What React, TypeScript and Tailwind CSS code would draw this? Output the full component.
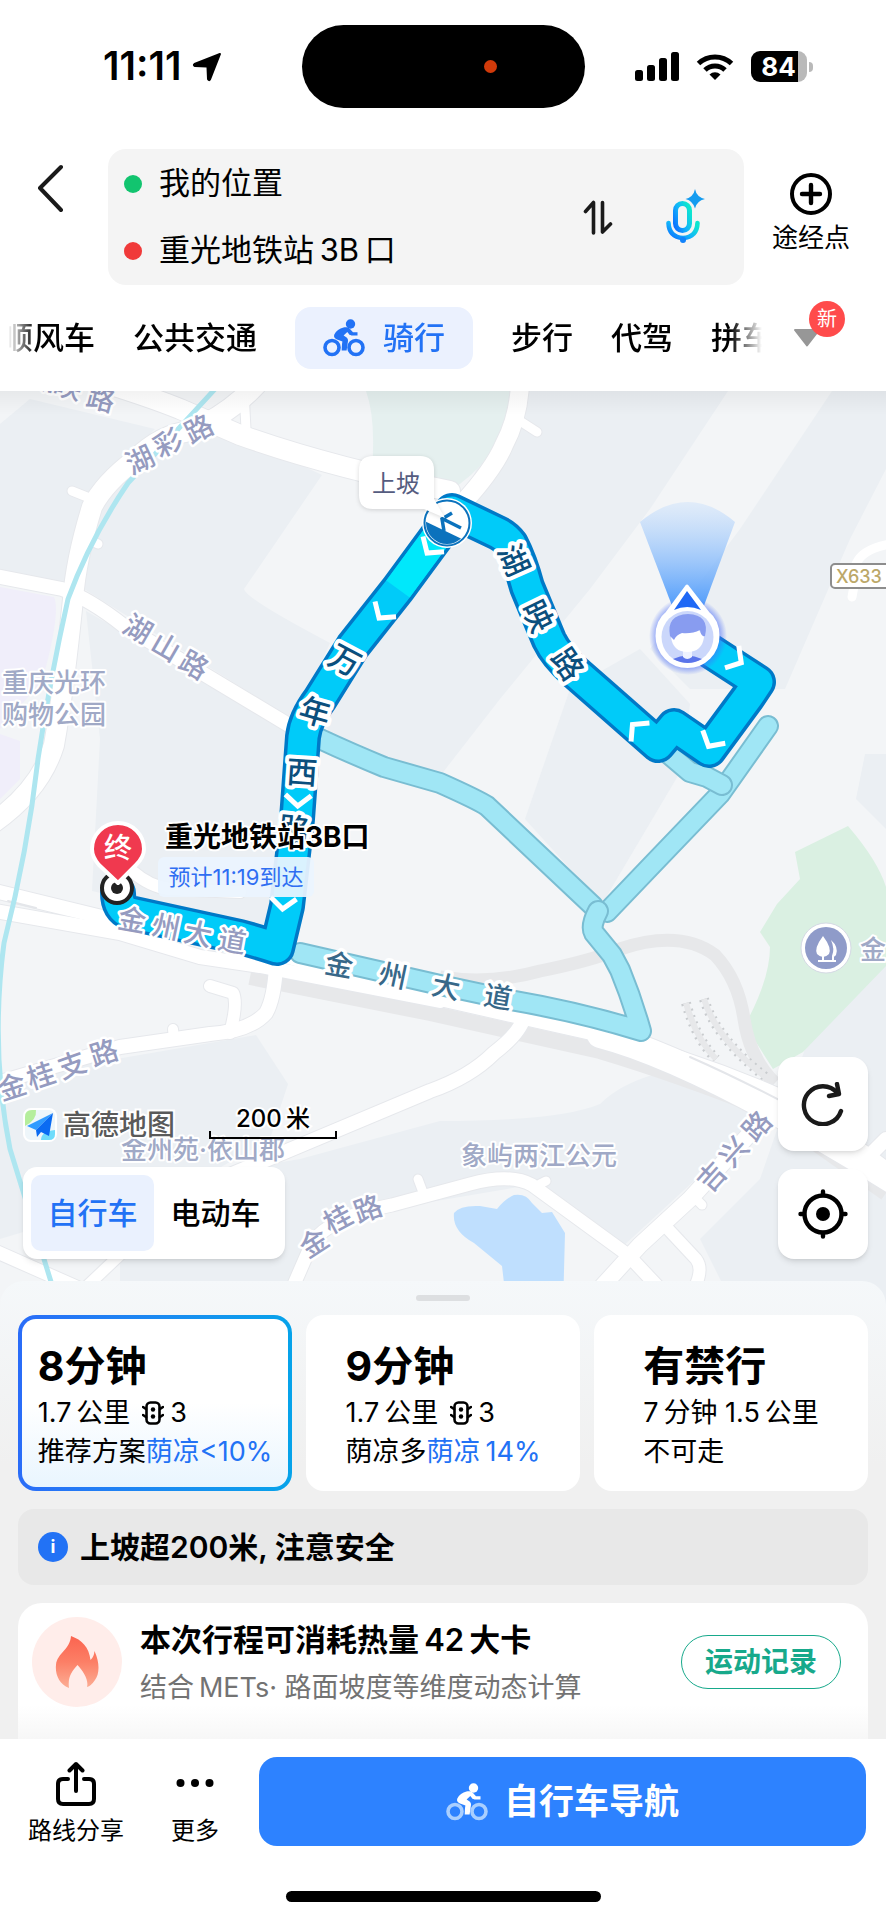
import { useState } from "react";
import clsx from "clsx";

type Glyph = [char: string, x: number, y: number, angle: number];

const tabsBefore = ["顺风车", "公共交通"];
const tabsAfter = ["步行", "代驾", "拼车"];

const routeLabels: Glyph[] = [
  ["万", 345, 661, 28],
  ["年", 315, 713, 16],
  ["西", 302, 773, 4],
  ["路", 294, 830, 6],
  ["湖", 514, 561, 66],
  ["映", 538, 617, 64],
  ["路", 568, 665, 56],
];

const avenueLabels: Glyph[] = [
  ["金", 339, 966, 10],
  ["州", 393, 977, 12],
  ["大", 446, 988, 12],
  ["道", 498, 998, 10],
];

const roadLabels: Glyph[] = [
  ["湖", 44, 380, 15],
  ["映", 68, 388, 15],
  ["路", 101, 400, 15],
  ["湖", 140, 461, -25],
  ["彩", 168, 444, -27],
  ["路", 199, 430, -27],
  ["湖", 138, 630, 30],
  ["山", 166, 648, 30],
  ["路", 194, 666, 30],
  ["金", 132, 921, 10],
  ["州", 166, 928, 12],
  ["大", 198, 935, 12],
  ["道", 232, 942, 10],
  ["金", 12, 1088, -18],
  ["桂", 41, 1077, -18],
  ["支", 72, 1066, -20],
  ["路", 104, 1054, -18],
  ["金", 314, 1244, -33],
  ["桂", 338, 1220, -28],
  ["路", 368, 1210, -20],
  ["吉", 712, 1178, -48],
  ["兴", 734, 1153, -48],
  ["路", 757, 1127, -48],
];

const chevrons = [
  [430, 550, 36],
  [382, 615, 36],
  [298, 802, 3],
  [283, 905, 5],
  [737, 661, -58],
  [711, 743, 30],
  [636, 729, 135],
];

const altRoutes = [
  "M768 727 L720 795 L650 868 L607 913",
  "M658 746 L690 773 L707 778 L722 786",
  "M320 740 Q350 754 384 768 L440 784 Q478 801 487 807 L593 907",
  "M300 954 L440 986 L510 1001 Q580 1013 641 1032 Q632 1000 620 971 L612 956 L594 934 Q590 927 598 912",
];

const mainRoute =
  "M687 637 L758 683 L748 698 L709 751 L674 727 L658 746 L600 695 L576 674 Q556 656 549 641 L527 588 Q520 562 511 545 Q506 538 498 534 L452 512 L437 537 L398 590 L353 647 L320 700 Q305 720 303 738 L297 820 L287 907 L277 949 Q258 943 240 938 L130 914 Q118 910 118 894";

const whiteRoads: [string, number][] = [
  ["M105 384 Q150 398 180 410 L240 436 Q330 468 450 492", 20],
  ["M256 386 Q228 416 190 432 Q160 436 136 460 Q104 484 92 508 Q76 560 73 600 Q64 690 54 746 Q40 792 -10 826", 20],
  ["M-5 577 L62 590 Q90 600 124 627 L292 728", 14],
  ["M520 386 Q518 420 504 446 Q494 470 462 505", 18],
  ["M520 422 L537 433", 9],
  ["M72 492 L92 500", 9],
  ["M88 540 L98 545", 9],
  ["M244 392 L246 430", 9],
  ["M132 872 Q150 888 170 890 L240 893", 12],
  ["M-5 892 L110 920 L260 950 L440 1000 L600 1036 Q700 1060 800 1106 L900 1180", 14],
  ["M-5 912 L120 934 L200 958 L260 967 L440 1002", 14],
  ["M600 1036 Q700 1062 900 1186", 26],
  ["M276 968 Q274 1000 266 1014 Q250 1032 210 1035 L120 1048 L-10 1086", 14],
  ["M210 987 L233 994 Q238 1004 230 1034", 12],
  ["M173 1030 L174 1040", 10],
  ["M524 1018 Q520 1034 494 1054 Q470 1078 430 1092 L230 1176", 14],
  ["M292 1290 L312 1244 Q330 1218 392 1206 L470 1185 Q510 1174 532 1186 L628 1256 L660 1290", 13],
  ["M418 1180 L424 1196", 9],
  ["M540 1185 L546 1182", 9],
  ["M598 1292 L640 1246 L690 1200 L778 1104", 16],
  ["M696 1200 L702 1206", 9],
  ["M668 1230 L696 1260 Q704 1270 694 1290", 12],
  ["M-5 1252 L90 1294", 13],
  ["M84 1290 L122 1254", 11],
  ["M886 1140 L862 1164", 14],
];

const Glyphs = ({ items, className }: { items: Glyph[]; className: string }) => (
  <g className={className} textAnchor="middle" dominantBaseline="central" stroke="#fff" paintOrder="stroke" strokeLinejoin="round">
    {items.map(([char, x, y, angle]) => (
      <text key={`${char}${x}`} x={x} y={y} transform={`rotate(${angle} ${x} ${y})`}>
        {char}
      </text>
    ))}
  </g>
);

const CyclistIcon = ({ wheel = "currentColor" }: { wheel?: string }) => (
  <svg viewBox="0 0 42 38" className="h-[38px] w-[42px]" fill="none" aria-hidden="true">
    <circle cx="9" cy="28.500" r="7" stroke={wheel} strokeWidth="3.600" />
    <circle cx="33" cy="28.500" r="7" stroke={wheel} strokeWidth="3.600" />
    <circle cx="27.500" cy="5" r="4.700" fill="currentColor" />
    <path
      d="M20.500 8.500C16.500 9.500 13 12 11.300 15.600C10.500 17.800 11.400 19.400 13.400 20.200L19.400 22.400C18.800 25.400 18.900 28.400 18.700 31.600H23.600L25 22C25.200 20 24.400 18.800 22.900 17.900L20.600 16.500L24.300 12.900L26.300 15.600C26.900 16.300 27.600 16.500 28.600 16.500H34.500V13.300H30L26.800 9.800C25.200 8.200 22.700 7.900 20.500 8.500Z"
      fill="currentColor"
    />
  </svg>
);

const StatusBar = () => (
  <div className="grid h-[149px] grid-cols-[1fr_283px_1fr] items-start pt-[25px]">
    <div className="flex h-[83px] items-center justify-end gap-2.5 pr-20">
      <span className="text-[39px] font-semibold">11:11</span>
      <svg viewBox="0 0 30 30" className="size-[30px] shrink-0" aria-hidden="true">
        <path d="M28 2 L18 27.500 Q17 29 16 27 L15.500 15.500 Q15.500 14.500 14.500 14.500 L3 14 Q1 13 2.500 12 Z" fill="#000" stroke="#000" strokeWidth="2" strokeLinejoin="round" />
      </svg>
    </div>
    <div className="flex h-[83px] items-center justify-end rounded-full bg-black pr-[88px]">
      <span className="size-[13px] rounded-full bg-[#d13a0a]" />
    </div>
    <div className="flex h-[83px] items-center gap-[17px] pl-[50px]">
      <svg viewBox="0 0 44 29" className="h-[29px] w-11" aria-hidden="true">
        <rect x="0" y="18" width="8" height="11" rx="2.500" />
        <rect x="12" y="13" width="8" height="16" rx="2.500" />
        <rect x="24" y="6" width="8" height="23" rx="2.500" />
        <rect x="36" y="0" width="8" height="29" rx="2.500" />
      </svg>
      <svg viewBox="0 0 38 28" className="h-7 w-[38px]" fill="none" stroke="#000" aria-hidden="true">
        <path d="M2.500 10.500 A24 24 0 0 1 35.500 10.500" strokeWidth="5" />
        <path d="M9 17 A14.500 14.500 0 0 1 29 17" strokeWidth="5" />
        <path d="M19 27 L13.500 21.500 A8 8 0 0 1 24.500 21.500 Z" fill="#000" stroke="none" />
      </svg>
      <div className="flex items-center gap-0.5">
        <div className="flex h-[31px] w-14 items-center justify-center rounded-[9px] bg-linear-to-r from-black from-84% to-[#b9b9b9] to-84% text-[26px] font-bold text-white">
          84
        </div>
        <span className="h-[10px] w-1 rounded-r-full bg-[#b9b9b9]" />
      </div>
    </div>
  </div>
);

const SearchHeader = () => (
  <div className="flex items-stretch">
    <button type="button" aria-label="返回" className="flex w-[108px] items-start pt-[15px] pl-9">
      <svg viewBox="0 0 30 48" className="h-12 w-[30px]" fill="none" stroke="#1a1a1a" strokeWidth="4" strokeLinecap="round" strokeLinejoin="round">
        <path d="M25 3 L4 24 L25 46" />
      </svg>
    </button>
    <div className="flex flex-1 items-center rounded-[18px] bg-[#f4f4f4] py-3 pr-[38px] pl-4">
      <div className="flex min-w-0 flex-1 flex-col gap-[22px]">
        <label className="flex items-center gap-[17px]">
          <span className="size-[18px] shrink-0 rounded-full bg-[#12c46f]" />
          <input aria-label="起点" defaultValue="我的位置" className="h-[45px] w-full min-w-0 bg-transparent text-[31px] outline-none" />
        </label>
        <label className="flex items-center gap-[17px]">
          <span className="size-[18px] shrink-0 rounded-full bg-[#f03a3a]" />
          <input aria-label="终点" defaultValue={"重光地铁站\u20093B\u2009口"} className="h-[45px] w-full min-w-0 bg-transparent text-[31px] outline-none" />
        </label>
      </div>
      <button type="button" aria-label="交换起终点" className="mr-[53px]">
        <svg viewBox="0 0 30 36" className="h-9 w-[30px]" fill="none" stroke="#1a1a1a" strokeWidth="3.600" strokeLinecap="round" strokeLinejoin="round">
          <path d="M2.500 12.500 L10.500 3.500 V34" />
          <path d="M27.500 25 L19.500 33 V3.500" />
        </svg>
      </button>
      <button type="button" aria-label="语音输入">
        <svg viewBox="0 0 40 56" className="h-14 w-10" fill="none">
          <defs>
            <linearGradient id="mic" x1="0" y1="1" x2="1" y2="0.200">
              <stop offset="0" stopColor="#0a6cff" />
              <stop offset="0.500" stopColor="#12b4fa" />
              <stop offset="1" stopColor="#0ee6cf" />
            </linearGradient>
          </defs>
          <rect x="9.500" y="14.500" width="14" height="27" rx="7" stroke="url(#mic)" strokeWidth="5" />
          <path d="M2.500 34 Q3 48 17 49 Q31 48 31.500 34" stroke="url(#mic)" strokeWidth="4.600" strokeLinecap="round" />
          <circle cx="17" cy="51" r="3" fill="#1283fb" />
          <path d="M29 0 Q30.500 8 39 10 Q30.500 12 29 19.500 Q27 12 19.500 10 Q27.500 8 29 0Z" fill="#149cf0" />
        </svg>
      </button>
    </div>
    <button type="button" className="flex w-[142px] flex-col items-center gap-1 pt-[23px] pr-2">
      <svg viewBox="0 0 44 44" className="size-11" fill="none" stroke="#000" strokeLinecap="round">
        <circle cx="22" cy="22" r="19" strokeWidth="4" />
        <path d="M22 13 V31 M13 22 H31" strokeWidth="4.400" />
      </svg>
      <span className="text-[26px] leading-9">途经点</span>
    </button>
  </div>
);

const ModeTabs = () => (
  <nav className="flex items-center py-[22px]">
    <div className="flex min-w-0 flex-1 items-center gap-[38px] overflow-hidden pl-0.5 text-[31px] font-medium whitespace-nowrap mask-[linear-gradient(to_right,transparent_8px,black_36px,black_calc(100%-36px),transparent_calc(100%-4px))]">
      {tabsBefore.map((tab) => (
        <button key={tab} type="button">{tab}</button>
      ))}
      <button type="button" aria-current="true" className="flex h-[62px] shrink-0 items-center gap-[18px] rounded-2xl bg-[#ebf1fe] px-7 text-[#2272f5]">
        <CyclistIcon />
        骑行
      </button>
      {tabsAfter.map((tab) => (
        <button key={tab} type="button">{tab}</button>
      ))}
    </div>
    <button type="button" aria-label="更多出行方式" className="relative flex h-[62px] w-[120px] items-center pl-[27px]">
      <svg viewBox="0 0 28 18" className="h-[18px] w-7">
        <path d="M2 1 H26 L14 16.500 Z" fill="#979797" stroke="#979797" strokeWidth="2" strokeLinejoin="round" />
      </svg>
      <span className="absolute -top-1.5 left-[43px] flex size-9 items-center justify-center rounded-full bg-[#ff4b4b] text-xl text-white">新</span>
    </button>
  </nav>
);

const MapCanvas = () => (
  <svg viewBox="0 392 886 918" preserveAspectRatio="xMidYMin slice" className="absolute inset-0 size-full" role="img" aria-label="路线地图">
    <defs>
      <linearGradient id="cone" x1="0" y1="0" x2="0" y2="1">
        <stop offset="0" stopColor="#cfe3fb" stopOpacity="0.500" />
        <stop offset="1" stopColor="#4797fb" />
      </linearGradient>
      <linearGradient id="topShade" x1="0" y1="0" x2="0" y2="1">
        <stop offset="0" stopColor="#000" stopOpacity="0.050" />
        <stop offset="1" stopColor="#000" stopOpacity="0" />
      </linearGradient>
      <radialGradient id="halo">
        <stop offset="0.750" stopColor="#4a6cf8" stopOpacity="0.700" />
        <stop offset="1" stopColor="#4a6cf8" stopOpacity="0" />
      </radialGradient>
      <clipPath id="slopeClip">
        <circle cx="447" cy="524" r="21" />
      </clipPath>
    </defs>

    {/* land */}
    <rect y="392" width="886" height="918" fill="#f3f5f7" />
    <g fill="#ebeff3">
      <path d="M0 425 L30 400 L155 430 L110 475 L85 510 L68 590 L0 572Z" />
      <path d="M215 425 L322 476 L244 590 Q246 600 330 644 L295 722 L84 590 L90 520 L135 470Z" />
      <path d="M86 612 L290 728 L280 935 L92 892 L100 740Z" />
      <path d="M515 392 H728 L650 510 L590 590 L500 700 L430 790 L330 740 L320 700 L452 520 Z" />
      <path d="M832 392 H886 V470 L850 540 L785 690 L690 690 L650 650 L740 530Z" />
      <path d="M570 690 L640 650 L690 705 L682 770 L602 905 L525 820Z" />
      <path d="M865 755 L886 755 V830 L856 800Z" />
      <path d="M0 1080 L256 1036 L288 1085 L270 1140 L200 1180 L0 1240Z" />
      <path d="M300 1160 L440 1122 Q560 1122 600 1105 Q620 1085 656 1075 L770 1112 L620 1250 L530 1186 L330 1220 L290 1282 H120 V1190Z" />
      <path d="M805 1050 L886 960 V1310 H735 L700 1240 L760 1180Z" />
    </g>
    <path d="M366 392 Q376 420 372 470 L434 500 Q500 470 516 392Z" fill="#e5f0ef" />
    <path d="M0 588 L54 598 Q60 610 48 660 L42 682 L0 730Z M0 735 L20 742 V780 L0 800Z" fill="#f0eefa" />
    <path d="M795 853 L848 827 Q878 862 886 888 V967 L803 1053 L773 1070 L745 1026 Q770 980 770 948 L760 933 L777 905 L800 880Z" fill="#daf0e2" />
    <path d="M454 1214 Q460 1206 480 1207 L497 1210 Q505 1200 514 1196 Q526 1194 532 1204 L542 1214 L552 1213 L565 1234 L563 1310 H507 L502 1267 L474 1244 Q452 1232 454 1214Z" fill="#bfdffe" />

    {/* railways */}
    <g fill="none" stroke="#e7e8ea">
      <path d="M250 978 L430 1014 L600 1052 Q680 1076 770 1112 L886 1194" strokeWidth="16" />
      <path d="M440 978 Q490 986 540 972 Q590 962 620 950 Q680 930 715 956 Q738 980 744 1020 Q750 1060 775 1084" strokeWidth="13" />
      <path d="M686 1004 Q696 1040 716 1060 M704 1000 Q716 1040 768 1080" strokeWidth="10" stroke="#c9cccf" strokeDasharray="2 5" />
      <path d="M686 1004 Q696 1040 716 1060 M704 1000 Q716 1040 768 1080" strokeWidth="6" />
    </g>

    {/* streets */}
    <g fill="none" strokeLinecap="round" strokeLinejoin="round">
      {whiteRoads.map(([d, width]) => (
        <path key={d} d={d} stroke="#e6e8ec" strokeWidth={width + 2} />
      ))}
      {whiteRoads.map(([d, width]) => (
        <path key={d} d={d} stroke="#fff" strokeWidth={width} />
      ))}
      <path d="M8 902 L36 909 M690 1058 Q740 1080 800 1112" stroke="#e4e6ea" strokeWidth="2" />
      <path d="M856 565 Q862 550 890 545 M858 565 L852 598" stroke="#fff" strokeWidth="9" />
      <path d="M215 390 Q160 450 128 484 Q90 540 68 600 Q50 680 38 760 Q28 850 4 944 Q-10 1050 10 1150 L52 1286" stroke="#aee6f0" strokeWidth="5" />
    </g>

    {/* alternative routes */}
    <g fill="none" strokeLinecap="round" strokeLinejoin="round">
      {altRoutes.map((d) => (
        <g key={d}>
          <path d={d} stroke="#79bdd2" strokeWidth="22" />
          <path d={d} stroke="#a0e6f5" strokeWidth="18" />
        </g>
      ))}
    </g>
    <Glyphs items={avenueLabels} className="fill-[#376889] stroke-[7px] text-[28px] font-medium" />

    {/* recommended route */}
    <g fill="none" strokeLinecap="round" strokeLinejoin="round">
      <path d={mainRoute} stroke="#0079c7" strokeWidth="36" />
      <path d={mainRoute} stroke="#00cbf9" strokeWidth="29" />
      <path d="M437 537 L398 590" stroke="#00e8fb" strokeWidth="29" strokeLinecap="butt" />
    </g>
    {chevrons.map(([x, y, angle]) => (
      <path key={`${x}-${y}`} d="M-13 -6 L0 5 L13 -6" transform={`translate(${x} ${y}) rotate(${angle})`} fill="none" stroke="#fff" strokeWidth="5" />
    ))}
    <Glyphs items={routeLabels} className="fill-[#0b4f7d] stroke-[8px] text-[31px] font-medium" />
    <Glyphs items={roadLabels} className="fill-[#959bc0] stroke-[5px] text-[28px] font-medium" />

    {/* places */}
    <g className="fill-[#a0a9c6] stroke-white stroke-4 text-[26px] font-medium" dominantBaseline="central" paintOrder="stroke" strokeLinejoin="round">
      <text x="2" y="683">重庆光环</text>
      <text x="2" y="715">购物公园</text>
      <text x="121" y="1150">金州苑·依山郡</text>
      <text x="461" y="1156">象屿两江公元</text>
      <text x="860" y="950">金</text>
    </g>
    <circle cx="826" cy="949" r="25" fill="#fff" stroke="#d5d9e4" />
    <circle cx="826" cy="949" r="21" fill="#8f9bc9" />
    <path d="M823 937 Q832 949 829 955 Q823 961 817 955 Q814 949 823 937Z M831 941 Q839 948 836 956 Q834 959 832 957 Q835 950 831 941Z M822 957 H824 V961 H832 V957 H834 V961 H836 V963 H818 V961 H822Z" fill="#fff" />

    <rect x="831" y="565" width="70" height="24" rx="4" fill="#fff" stroke="#8d8d8d" strokeWidth="2" />
    <text x="836" y="577" dominantBaseline="central" className="fill-[#bca869] text-lg font-medium">X633</text>

    {/* slope marker */}
    <circle cx="447" cy="524" r="25" fill="#fff" />
    <circle cx="447" cy="524" r="22.500" fill="#fff" stroke="#0b72bd" strokeWidth="2" />
    <path d="M420 520 L464 541 L460 550 H420 Z" fill="#0b72bd" clipPath="url(#slopeClip)" />
    <path d="M461 529 L443 520 M452 514 L442 520 L444 532" fill="none" stroke="#0b72bd" strokeWidth="3.500" />
    <g className="drop-shadow-sm">
      <path d="M373 457 H420 Q434 457 434 471 V500 L445 519 L424 510 H373 Q359 510 359 496 V471 Q359 457 373 457Z" fill="#fff" />
    </g>
    <text x="396" y="484" textAnchor="middle" dominantBaseline="central" className="fill-[#555c7f] text-2xl">上坡</text>

    {/* current position */}
    <path d="M640 523 Q688 483 735 523 L702 612 H674 Z" fill="url(#cone)" />
    <circle cx="688" cy="637" r="39" fill="url(#halo)" />
    <path d="M687 587 L708 614 Q718 622 718 637 A30.500 30.500 0 0 1 657 637 Q657 622 667 614Z" fill="#fff" stroke="#fff" strokeWidth="3" strokeLinejoin="round" />
    <path d="M687 592 L701 611 Q687 605 674 611Z" fill="#1f68f5" />
    <circle cx="687.500" cy="638" r="26" fill="#cbd7fb" />
    <path d="M673 660 Q687 653 702 660 Q688 668 673 660Z" fill="#5a74ea" />
    <path d="M683 648 H692 V658 Q687 662 683 658Z" fill="#eef2ff" />
    <path d="M671 638 Q673 653 687.500 653 Q702 653 704 638 L698 630 H677Z" fill="#fff" />
    <path d="M670 637 Q666 616 688 615 Q710 616 705 637 Q701 638 700 631 Q692 635 682 634 Q676 636 674 641 Z" fill="#889cf0" />

    {/* destination */}
    <circle cx="117" cy="889" r="15" fill="#fff" stroke="#222" strokeWidth="4" />
    <circle cx="117" cy="889" r="6" fill="#222" />
    <path d="M118 884 L99 866 Q92 858 92 850 A26 26 0 0 1 144 850 Q144 858 136 866Z" fill="#f0394f" stroke="#fff" strokeWidth="4" strokeLinejoin="round" />
    <text x="118" y="849" textAnchor="middle" dominantBaseline="central" className="fill-white text-[28px] font-medium">终</text>
    <text x="165" y="838" dominantBaseline="central" stroke="#fff" strokeWidth="4" paintOrder="stroke" strokeLinejoin="round" className="fill-black text-[28px] font-bold">
      重光地铁站3B口
    </text>
    <rect x="158" y="858" width="156" height="40" rx="6" fill="#ebf4fe" fillOpacity="0.930" />
    <text x="236" y="878" textAnchor="middle" dominantBaseline="central" className="fill-[#2f6ef2] text-[22px]">预计11:19到达</text>

    <rect y="392" width="886" height="24" fill="url(#topShade)" />
  </svg>
);

const MapControls = () => {
  const [vehicle, setVehicle] = useState("自行车");
  return (
    <div className="absolute inset-x-0 bottom-[50px] flex items-end justify-between pr-[18px] pl-[23px]">
      <div className="flex flex-col gap-6">
        <div className="flex items-center gap-[34px]">
          <div className="flex items-center gap-1.5">
            <svg viewBox="0 0 34 34" className="size-[34px]" aria-hidden="true">
              <rect x="1" y="1" width="32" height="32" rx="7" fill="#eef6fa" stroke="#fff" strokeWidth="2" />
              <path d="M2 9 Q2 2 9 2 H13 Q14 12 2 18Z" fill="#b5ee9c" />
              <path d="M18 32 Q18 23 32 22 V26 Q32 32 26 32Z" fill="#6fdcfb" />
              <path d="M30 5 L4 18 L13 22 Z" fill="#2f9bff" />
              <path d="M30 5 L13 22 L14 29 L18 24 L26 28 Z" fill="#0a6bf2" />
            </svg>
            <span className="text-[28px] leading-8 font-medium text-[#5a5a5a] [-webkit-text-stroke:4px_white] [paint-order:stroke_fill]">高德地图</span>
          </div>
          <div className="mb-1 flex w-32 flex-col items-center">
            <span className="text-2xl leading-6 font-medium [-webkit-text-stroke:4px_white] [paint-order:stroke_fill]">{"200\u2009米"}</span>
            <span className="h-2 w-full border-x-2 border-b-2 border-black" />
          </div>
        </div>
        <div className="flex self-start rounded-[14px] bg-white p-2 shadow-md">
          {["自行车", "电动车"].map((name) => (
            <button
              key={name}
              type="button"
              aria-pressed={vehicle === name}
              onClick={() => setVehicle(name)}
              className={clsx(
                "h-[76px] w-[123px] rounded-[10px] text-[30px] font-medium",
                vehicle === name ? "bg-[#eaf1fe] text-[#2272f5]" : "text-black"
              )}
            >
              {name}
            </button>
          ))}
        </div>
      </div>
      <div className="flex flex-col gap-[18px]">
        <button type="button" aria-label="刷新" className="flex h-[94px] w-[90px] items-center justify-center rounded-2xl bg-white shadow-md">
          <svg viewBox="0 0 44 44" className="size-11" fill="none" stroke="#1a1a1a" strokeWidth="4.400" strokeLinecap="round" strokeLinejoin="round">
            <path d="M40 29 A19 19 0 1 1 36.500 11" />
            <path d="M36 2 L38 12 L28 14" />
          </svg>
        </button>
        <button type="button" aria-label="定位" className="flex size-[90px] items-center justify-center rounded-2xl bg-white shadow-md">
          <svg viewBox="0 0 50 50" className="size-[50px]" fill="none" stroke="#000" strokeWidth="4.400" strokeLinecap="round">
            <circle cx="25" cy="25" r="18.500" />
            <circle cx="25" cy="25" r="7" fill="#000" stroke="none" />
            <path d="M25 2.500 V6 M25 44 V47.500 M2.500 25 H6 M44 25 H47.500" />
          </svg>
        </button>
      </div>
    </div>
  );
};

const TrafficLightIcon = () => (
  <svg viewBox="0 0 22 24" className="h-6 w-[22px]" fill="none" stroke="#000" aria-hidden="true">
    <rect x="4.500" y="1.500" width="13" height="21" rx="4" strokeWidth="2.600" />
    <circle cx="11" cy="8.500" r="2.200" fill="#000" stroke="none" />
    <circle cx="11" cy="15.500" r="2.200" fill="#000" stroke="none" />
    <path d="M1 6 L4 8 M1 14 L4 16 M21 6 L18 8 M21 14 L18 16" strokeWidth="2.600" strokeLinecap="round" />
  </svg>
);

const plans = [
  { title: "8分钟", distance: "1.7\u2009公里", lights: 3, note: "推荐方案", shade: "荫凉<10%" },
  { title: "9分钟", distance: "1.7\u2009公里", lights: 3, note: "荫凉多", shade: "荫凉\u200914%" },
  { title: "有禁行", distance: "7\u2009分钟 1.5\u2009公里", lights: 0, note: "不可走", shade: "" },
];

const PlanCards = () => {
  const [active, setActive] = useState(0);
  return (
    <div className="grid grid-cols-3 gap-3.5">
      {plans.map((plan, i) => (
        <button
          key={plan.title}
          type="button"
          aria-pressed={active === i}
          onClick={() => setActive(i)}
          className={clsx(
            "rounded-[18px] p-1",
            active === i ? "bg-linear-to-r from-[#2a6cf8] to-[#06a3ea]" : "bg-white"
          )}
        >
          <span
            className={clsx(
              "flex h-[168px] flex-col items-center justify-center rounded-[14px] whitespace-nowrap",
              active === i && "bg-linear-to-b from-white from-50% to-[#e9f5fe]"
            )}
          >
            <span className="flex flex-col items-start pt-1 text-[27px] leading-[39px]">
              <span className="text-[41px] leading-[54px] font-bold">{plan.title}</span>
              <span className="flex items-center">
                {plan.distance}
                {plan.lights > 0 && (
                  <span className="flex items-center gap-1.5 pl-3">
                    <TrafficLightIcon />
                    {plan.lights}
                  </span>
                )}
              </span>
              <span>
                {plan.note}
                <span className="text-[#2272f5]">{plan.shade}</span>
              </span>
            </span>
          </span>
        </button>
      ))}
    </div>
  );
};

const CalorieCard = () => (
  <section className="flex h-[136px] items-start rounded-t-3xl bg-linear-to-b from-white from-75% to-[#f7f7f7] pr-[27px] pl-3.5">
    <span className="mt-3.5 flex size-[90px] shrink-0 items-center justify-center rounded-full bg-[#ffedea]">
      <svg viewBox="0 0 44 52" className="h-[52px] w-11" aria-hidden="true">
        <defs>
          <linearGradient id="flame" x1="0" y1="0" x2="0" y2="1">
            <stop offset="0" stopColor="#fb6450" />
            <stop offset="0.500" stopColor="#fc7f66" />
            <stop offset="1" stopColor="#fcae95" />
          </linearGradient>
        </defs>
        <path d="M16 0 C27 4 34 11 35.500 24 Q39 21 39.500 15 C45 27 44.500 38 40 44 Q36 50 32 51 C34 44 28 35 22.500 29 C17 35 12.500 41 14 52 C4 48 0 38 1 29 C2 17 15 14 16 0Z" fill="url(#flame)" />
      </svg>
    </span>
    <div className="min-w-0 flex-1 pt-3.5 pl-[18px] whitespace-nowrap">
      <h2 className="text-[31px] leading-[46px] font-semibold">{"本次行程可消耗热量\u200942\u2009大卡"}</h2>
      <p className="pt-0.5 text-[27px] leading-[46px] text-[#737373]">{"结合\u2009METs· 路面坡度等维度动态计算"}</p>
    </div>
    <button type="button" className="mt-8 h-[54px] w-40 shrink-0 rounded-full border border-[#17a98b] text-[28px] font-semibold text-[#17a98b]">
      运动记录
    </button>
  </section>
);

const BottomBar = () => (
  <footer className="flex flex-col items-center bg-white pt-[18px] pb-[18px]">
    <div className="flex w-full items-stretch pr-5 pl-6">
      <button type="button" className="flex w-[104px] flex-col items-center pt-1 text-2xl whitespace-nowrap">
        <svg viewBox="0 0 42 46" className="h-[46px] w-[42px]" fill="none" stroke="#000" strokeWidth="4" strokeLinecap="round" strokeLinejoin="round">
          <path d="M13 18 H8 Q3 18 3 23 V38 Q3 43 8 43 H34 Q39 43 39 38 V23 Q39 18 34 18 H29" />
          <path d="M21 30 V3 M14.500 9.500 L21 3 L27.500 9.500" />
        </svg>
        <span className="pt-2 leading-8">路线分享</span>
      </button>
      <button type="button" className="ml-[43px] flex w-12 flex-col items-center pt-1 text-2xl whitespace-nowrap">
        <svg viewBox="0 0 38 46" className="h-[46px] w-[38px]">
          <circle cx="4.500" cy="22" r="4" />
          <circle cx="19" cy="22" r="4" />
          <circle cx="33.500" cy="22" r="4" />
        </svg>
        <span className="pt-2 leading-8">更多</span>
      </button>
      <button type="button" className="ml-10 flex h-[89px] flex-1 items-center justify-center gap-4 rounded-[18px] bg-[#2d82ff] text-[35px] font-semibold text-white">
        <CyclistIcon wheel="#a9cfff" />
        自行车导航
      </button>
    </div>
    <span className="mt-11 h-[11px] w-[315px] rounded-full bg-black" />
  </footer>
);

const App = () => {
  return (
    <main className="flex min-h-screen flex-col overflow-hidden bg-white font-[Inter,'Noto_Sans_CJK_SC',sans-serif] text-black" lang="zh-CN">
      <header>
        <StatusBar />
        <SearchHeader />
        <ModeTabs />
      </header>
      <section className="relative min-h-[600px] flex-1">
        <MapCanvas />
        <MapControls />
      </section>
      <section className="relative -mt-7 flex flex-col rounded-t-3xl bg-linear-to-b from-[#f5f8fa] to-[#f0f0f0] to-40% px-[18px]">
        <span className="my-3.5 h-1.5 w-[54px] self-center rounded-full bg-[#dddfe1]" />
        <PlanCards />
        <div className="my-[18px] flex h-[76px] items-center gap-3 rounded-2xl bg-[#e8e8e8] px-5">
          <span className="flex size-[30px] items-center justify-center rounded-full bg-[#2272f5] text-lg font-bold text-white">i</span>
          <p className="text-[30px] font-semibold">上坡超200米, 注意安全</p>
        </div>
        <CalorieCard />
      </section>
      <BottomBar />
    </main>
  );
};

export default App;
